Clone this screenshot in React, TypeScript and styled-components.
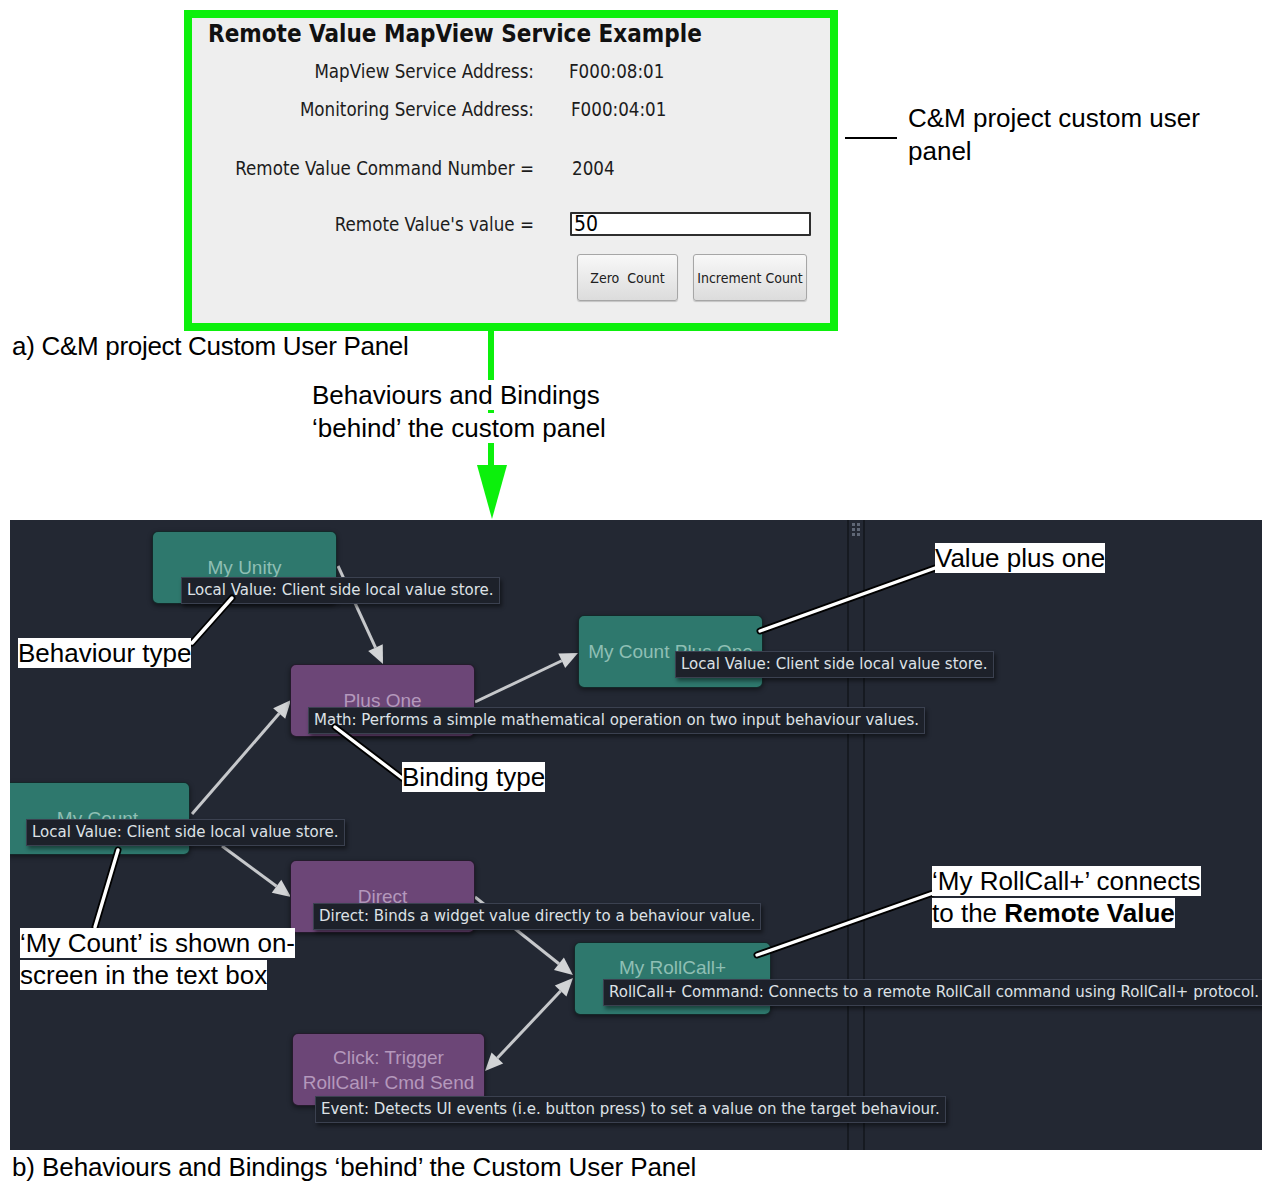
import React from "react";
import styled, { createGlobalStyle, css } from "styled-components";

const GlobalStyle = createGlobalStyle`
  html, body {
    margin: 0;
    padding: 0;
    background: #ffffff;
  }
  body {
    font-family: "Liberation Sans", Arial, sans-serif;
    color: #000;
  }
`;

const Page = styled.div`
  width: 1264px;
  height: 1182px;
  background: #ffffff;
  overflow: hidden;
`;

/* ---------- part a: the custom user panel ---------- */

const TopRow = styled.div`
  display: flex;
  align-items: flex-start;
  padding: 10px 0 0 184px;
`;

const Panel = styled.div`
  box-sizing: border-box;
  width: 654px;
  height: 321px;
  border: 8px solid #0cf00c;
  background: #eeeeee;
  display: flex;
  flex-direction: column;
  font-family: "DejaVu Sans Condensed", "DejaVu Sans", sans-serif;
  font-stretch: condensed;
  color: #1c1c1c;
`;

const PanelTitle = styled.h1`
  margin: 1px 0 0 16px;
  font-size: 24px;
  line-height: 30px;
  font-weight: 700;
  color: #111111;
`;

const FieldRow = styled.div<{ $top: number }>`
  display: grid;
  grid-template-columns: 342px 1fr;
  column-gap: 35px;
  align-items: center;
  height: 38px;
  margin-top: ${(p) => p.$top}px;
  font-size: 18.6px;
`;

const FieldLabel = styled.span`
  text-align: right;
  white-space: nowrap;
`;

const FieldValue = styled.span<{ $shift?: number }>`
  padding-left: ${(p) => p.$shift ?? 0}px;
`;

const ValueInput = styled.div`
  box-sizing: border-box;
  width: 241px;
  height: 24px;
  margin-left: 1px;
  border: 2px solid #2e2e2e;
  border-radius: 1px;
  background: #ffffff;
  padding-left: 2px;
  font-size: 21px;
  line-height: 20px;
  color: #000000;
`;

const ButtonRow = styled.div`
  display: flex;
  justify-content: flex-end;
  gap: 15px;
  margin-top: 11px;
  padding-right: 23px;
`;

const PanelButton = styled.button<{ $w: number }>`
  width: ${(p) => p.$w}px;
  height: 47px;
  padding: 0;
  border: 1px solid #a6a6a6;
  border-radius: 3px;
  background: linear-gradient(#f8f8f8, #dcdcdc);
  box-shadow: 0 1px 1px rgba(0, 0, 0, 0.18);
  font-family: inherit;
  font-stretch: condensed;
  font-size: 14px;
  color: #202020;
  white-space: pre;
`;

const SideNote = styled.div`
  display: flex;
  align-items: flex-start;
  margin-left: 7px;
`;

const LeaderRule = styled.div`
  width: 52px;
  height: 2px;
  margin-top: 127px;
  background: #000000;
`;

const SideNoteText = styled.p`
  width: 330px;
  margin: 92px 0 0 11px;
  font-size: 26px;
  line-height: 33px;
`;

/* ---------- link between a and b ---------- */

const stacked = css`
  grid-area: 1 / 1;
  align-self: start;
  justify-self: start;
`;

const Middle = styled.div`
  display: grid;
  height: 189px;
`;

const Caption = styled.p`
  ${stacked};
  margin: 0 0 0 12px;
  font-size: 26px;
  line-height: 30px;
  letter-spacing: -0.3px;
  white-space: nowrap;
`;

const FlowArrow = styled.svg`
  ${stacked};
  margin-left: 476px;
`;

const FlowNote = styled.p`
  ${stacked};
  margin: 48px 0 0 312px;
  font-size: 26px;
  line-height: 33px;
`;

const Backed = styled.span`
  background: #ffffff;
  box-decoration-break: clone;
  -webkit-box-decoration-break: clone;
`;

/* ---------- part b: the behaviour canvas ---------- */

const Canvas = styled.div`
  position: relative;
  display: flex;
  width: 1252px;
  height: 630px;
  margin-left: 10px;
  background: #232833;
  overflow: hidden;
`;

const ScenePane = styled.div<{ $w?: number }>`
  flex: ${(p) => (p.$w ? `0 0 ${p.$w}px` : "1")};
`;

const Splitter = styled.div`
  flex: 0 0 14px;
  border-left: 2px solid #161a21;
  border-right: 2px solid #161a21;
  display: flex;
  justify-content: center;
  padding-top: 3px;
`;

const Grip = styled.div`
  display: grid;
  grid-template-columns: repeat(2, 3px);
  gap: 2px;
  align-content: start;
`;

const GripDot = styled.span`
  width: 3px;
  height: 3px;
  background: #5f6776;
`;

const Layer = styled.svg`
  position: absolute;
  left: 0;
  top: 0;
  pointer-events: none;
`;

type Kind = "value" | "binding";

const Node = styled.div<{ $kind: Kind; $x: number; $y: number; $w: number; $labelTop?: number }>`
  position: absolute;
  left: ${(p) => p.$x}px;
  top: ${(p) => p.$y}px;
  width: ${(p) => p.$w}px;
  height: 73px;
  box-sizing: border-box;
  border: 1px solid rgba(12, 14, 19, 0.75);
  border-radius: 6px;
  background: ${(p) => (p.$kind === "value" ? "#2e786d" : "#6c4677")};
  color: ${(p) => (p.$kind === "value" ? "#8fbfb4" : "#b498bc")};
  box-shadow: 0 2px 5px rgba(0, 0, 0, 0.45);
  display: flex;
  flex-direction: column;
  align-items: center;
  justify-content: ${(p) => (p.$labelTop ? "flex-start" : "center")};
  padding-top: ${(p) => p.$labelTop ?? 0}px;
  font-family: "Liberation Sans", Arial, sans-serif;
  font-size: 19px;
  line-height: 25px;
  white-space: nowrap;
`;

const Tip = styled.div<{ $x: number; $y: number }>`
  position: absolute;
  left: ${(p) => p.$x}px;
  top: ${(p) => p.$y}px;
  height: 27px;
  box-sizing: border-box;
  padding: 0 5px;
  border: 1px solid #3b4150;
  background: #1d212a;
  box-shadow: 2px 3px 4px rgba(0, 0, 0, 0.45);
  color: #dde1e6;
  font-family: "DejaVu Sans", sans-serif;
  font-size: 15px;
  line-height: 25px;
  white-space: nowrap;
`;

const Callout = styled.div<{ $x: number; $y: number }>`
  position: absolute;
  left: ${(p) => p.$x}px;
  top: ${(p) => p.$y}px;
  font-family: "Liberation Sans", Arial, sans-serif;
  font-size: 26px;
  line-height: 32px;
  color: #000000;
  white-space: nowrap;
`;

const BottomCaption = styled.p`
  margin: 2px 0 0 12px;
  font-size: 26px;
  line-height: 30px;
  letter-spacing: -0.1px;
  white-space: nowrap;
`;

interface SceneNode {
  kind: Kind;
  lines: string[];
  x: number;
  y: number;
  w: number;
  labelTop?: number;
  tip: string;
  tipX: number;
  tipY: number;
}

const localTip = "Local Value: Client side local value store.";

const sceneNodes: SceneNode[] = [
  { kind: "value", lines: ["My Unity"], x: 142, y: 11, w: 185, tip: localTip, tipX: 28, tipY: 45 },
  {
    kind: "binding",
    lines: ["Plus One"],
    x: 280,
    y: 144,
    w: 185,
    tip: "Math: Performs a simple mathematical operation on two input behaviour values.",
    tipX: 17,
    tipY: 42,
  },
  { kind: "value", lines: ["My Count Plus One"], x: 568, y: 95, w: 185, tip: localTip, tipX: 96, tipY: 35 },
  { kind: "value", lines: ["My Count"], x: -5, y: 262, w: 185, tip: localTip, tipX: 20, tipY: 36 },
  {
    kind: "binding",
    lines: ["Direct"],
    x: 280,
    y: 340,
    w: 185,
    tip: "Direct: Binds a widget value directly to a behaviour value.",
    tipX: 22,
    tipY: 42,
  },
  {
    kind: "value",
    lines: ["My RollCall+"],
    x: 564,
    y: 422,
    w: 197,
    labelTop: 12,
    tip: "RollCall+ Command: Connects to a remote RollCall command using RollCall+ protocol.",
    tipX: 28,
    tipY: 36,
  },
  {
    kind: "binding",
    lines: ["Click: Trigger", "RollCall+ Cmd Send"],
    x: 282,
    y: 513,
    w: 193,
    tip: "Event: Detects UI events (i.e. button press) to set a value on the target behaviour.",
    tipX: 22,
    tipY: 62,
  },
];

type Pt = [number, number];

const edges: { from: Pt; to: Pt; both?: boolean }[] = [
  { from: [328, 46], to: [373, 144] },
  { from: [182, 294], to: [281, 180] },
  { from: [465, 182], to: [568, 133] },
  { from: [212, 326], to: [281, 377] },
  { from: [465, 377], to: [563, 455] },
  { from: [475, 551], to: [563, 458], both: true },
];

const leaders: { from: Pt; to: Pt }[] = [
  { from: [222, 78], to: [182, 123] },
  { from: [750, 111], to: [925, 48] },
  { from: [325, 207], to: [392, 258] },
  { from: [108, 330], to: [85, 407] },
  { from: [747, 435], to: [923, 373] },
];

const head = (tip: Pt, tail: Pt, len = 18, half = 8) => {
  const dx = tip[0] - tail[0];
  const dy = tip[1] - tail[1];
  const d = Math.hypot(dx, dy);
  const ux = dx / d;
  const uy = dy / d;
  const bx = tip[0] - ux * len;
  const by = tip[1] - uy * len;
  const pts = [
    [tip[0], tip[1]],
    [bx - uy * half, by + ux * half],
    [bx + uy * half, by - ux * half],
  ];
  return { base: [bx, by] as Pt, points: pts.map((p) => p.join(",")).join(" ") };
};

const Edge = ({ from, to, both }: { from: Pt; to: Pt; both?: boolean }) => {
  const end = head(to, from);
  const start = both ? head(from, to) : null;
  const s = start ? start.base : from;
  return (
    <g>
      <line x1={s[0]} y1={s[1]} x2={end.base[0]} y2={end.base[1]} stroke="#c6c8cb" strokeWidth={3} />
      <polygon points={end.points} fill="#d2d4d6" />
      {start && <polygon points={start.points} fill="#d2d4d6" />}
    </g>
  );
};

const Leader = ({ from, to }: { from: Pt; to: Pt }) => (
  <g strokeLinecap="round">
    <line x1={from[0]} y1={from[1]} x2={to[0]} y2={to[1]} stroke="#000" strokeWidth={7} />
    <line x1={from[0]} y1={from[1]} x2={to[0]} y2={to[1]} stroke="#fff" strokeWidth={3.4} />
  </g>
);

export default function App() {
  return (
    <Page>
      <GlobalStyle />
      <TopRow>
        <Panel>
          <PanelTitle>Remote Value MapView Service Example</PanelTitle>
          <FieldRow $top={3}>
            <FieldLabel>MapView Service Address:</FieldLabel>
            <FieldValue>F000:08:01</FieldValue>
          </FieldRow>
          <FieldRow $top={0}>
            <FieldLabel>Monitoring Service Address:</FieldLabel>
            <FieldValue $shift={2}>F000:04:01</FieldValue>
          </FieldRow>
          <FieldRow $top={21}>
            <FieldLabel>Remote Value Command Number =</FieldLabel>
            <FieldValue $shift={3}>2004</FieldValue>
          </FieldRow>
          <FieldRow $top={18}>
            <FieldLabel>Remote Value's value =</FieldLabel>
            <ValueInput>50</ValueInput>
          </FieldRow>
          <ButtonRow>
            <PanelButton $w={101}>{"Zero  Count"}</PanelButton>
            <PanelButton $w={114}>Increment Count</PanelButton>
          </ButtonRow>
        </Panel>
        <SideNote>
          <LeaderRule />
          <SideNoteText>C&amp;M project custom user panel</SideNoteText>
        </SideNote>
      </TopRow>

      <Middle>
        <FlowArrow width={32} height={189} viewBox="0 0 32 189">
          <rect x={12} y={0} width={6} height={136} fill="#0cf00c" />
          <polygon points="1,134 31,134 16,188" fill="#0cf00c" />
        </FlowArrow>
        <Caption>a) C&amp;M project Custom User Panel</Caption>
        <FlowNote>
          <Backed>Behaviours and Bindings</Backed>
          <br />
          <Backed>‘behind’ the custom panel</Backed>
        </FlowNote>
      </Middle>

      <Canvas>
        <ScenePane $w={837} />
        <Splitter>
          <Grip>
            {Array.from({ length: 6 }).map((_, i) => (
              <GripDot key={i} />
            ))}
          </Grip>
        </Splitter>
        <ScenePane />

        <Layer width={1252} height={630}>
          {edges.map((e, i) => (
            <Edge key={i} {...e} />
          ))}
        </Layer>

        {sceneNodes.map((n) => (
          <Node key={n.lines.join(" ")} $kind={n.kind} $x={n.x} $y={n.y} $w={n.w} $labelTop={n.labelTop}>
            {n.lines.map((l) => (
              <span key={l}>{l}</span>
            ))}
            <Tip $x={n.tipX} $y={n.tipY}>
              {n.tip}
            </Tip>
          </Node>
        ))}

        <Layer width={1252} height={630}>
          {leaders.map((l, i) => (
            <Leader key={i} {...l} />
          ))}
        </Layer>

        <Callout $x={8} $y={117}>
          <Backed>Behaviour type</Backed>
        </Callout>
        <Callout $x={925} $y={22}>
          <Backed>Value plus one</Backed>
        </Callout>
        <Callout $x={392} $y={241}>
          <Backed>Binding type</Backed>
        </Callout>
        <Callout $x={10} $y={407}>
          <Backed>‘My Count’ is shown on-</Backed>
          <br />
          <Backed>screen in the text box</Backed>
        </Callout>
        <Callout $x={922} $y={345}>
          <Backed>‘My RollCall+’ connects</Backed>
          <br />
          <Backed>
            to the <b>Remote Value</b>
          </Backed>
        </Callout>
      </Canvas>

      <BottomCaption>b) Behaviours and Bindings ‘behind’ the Custom User Panel</BottomCaption>
    </Page>
  );
}
